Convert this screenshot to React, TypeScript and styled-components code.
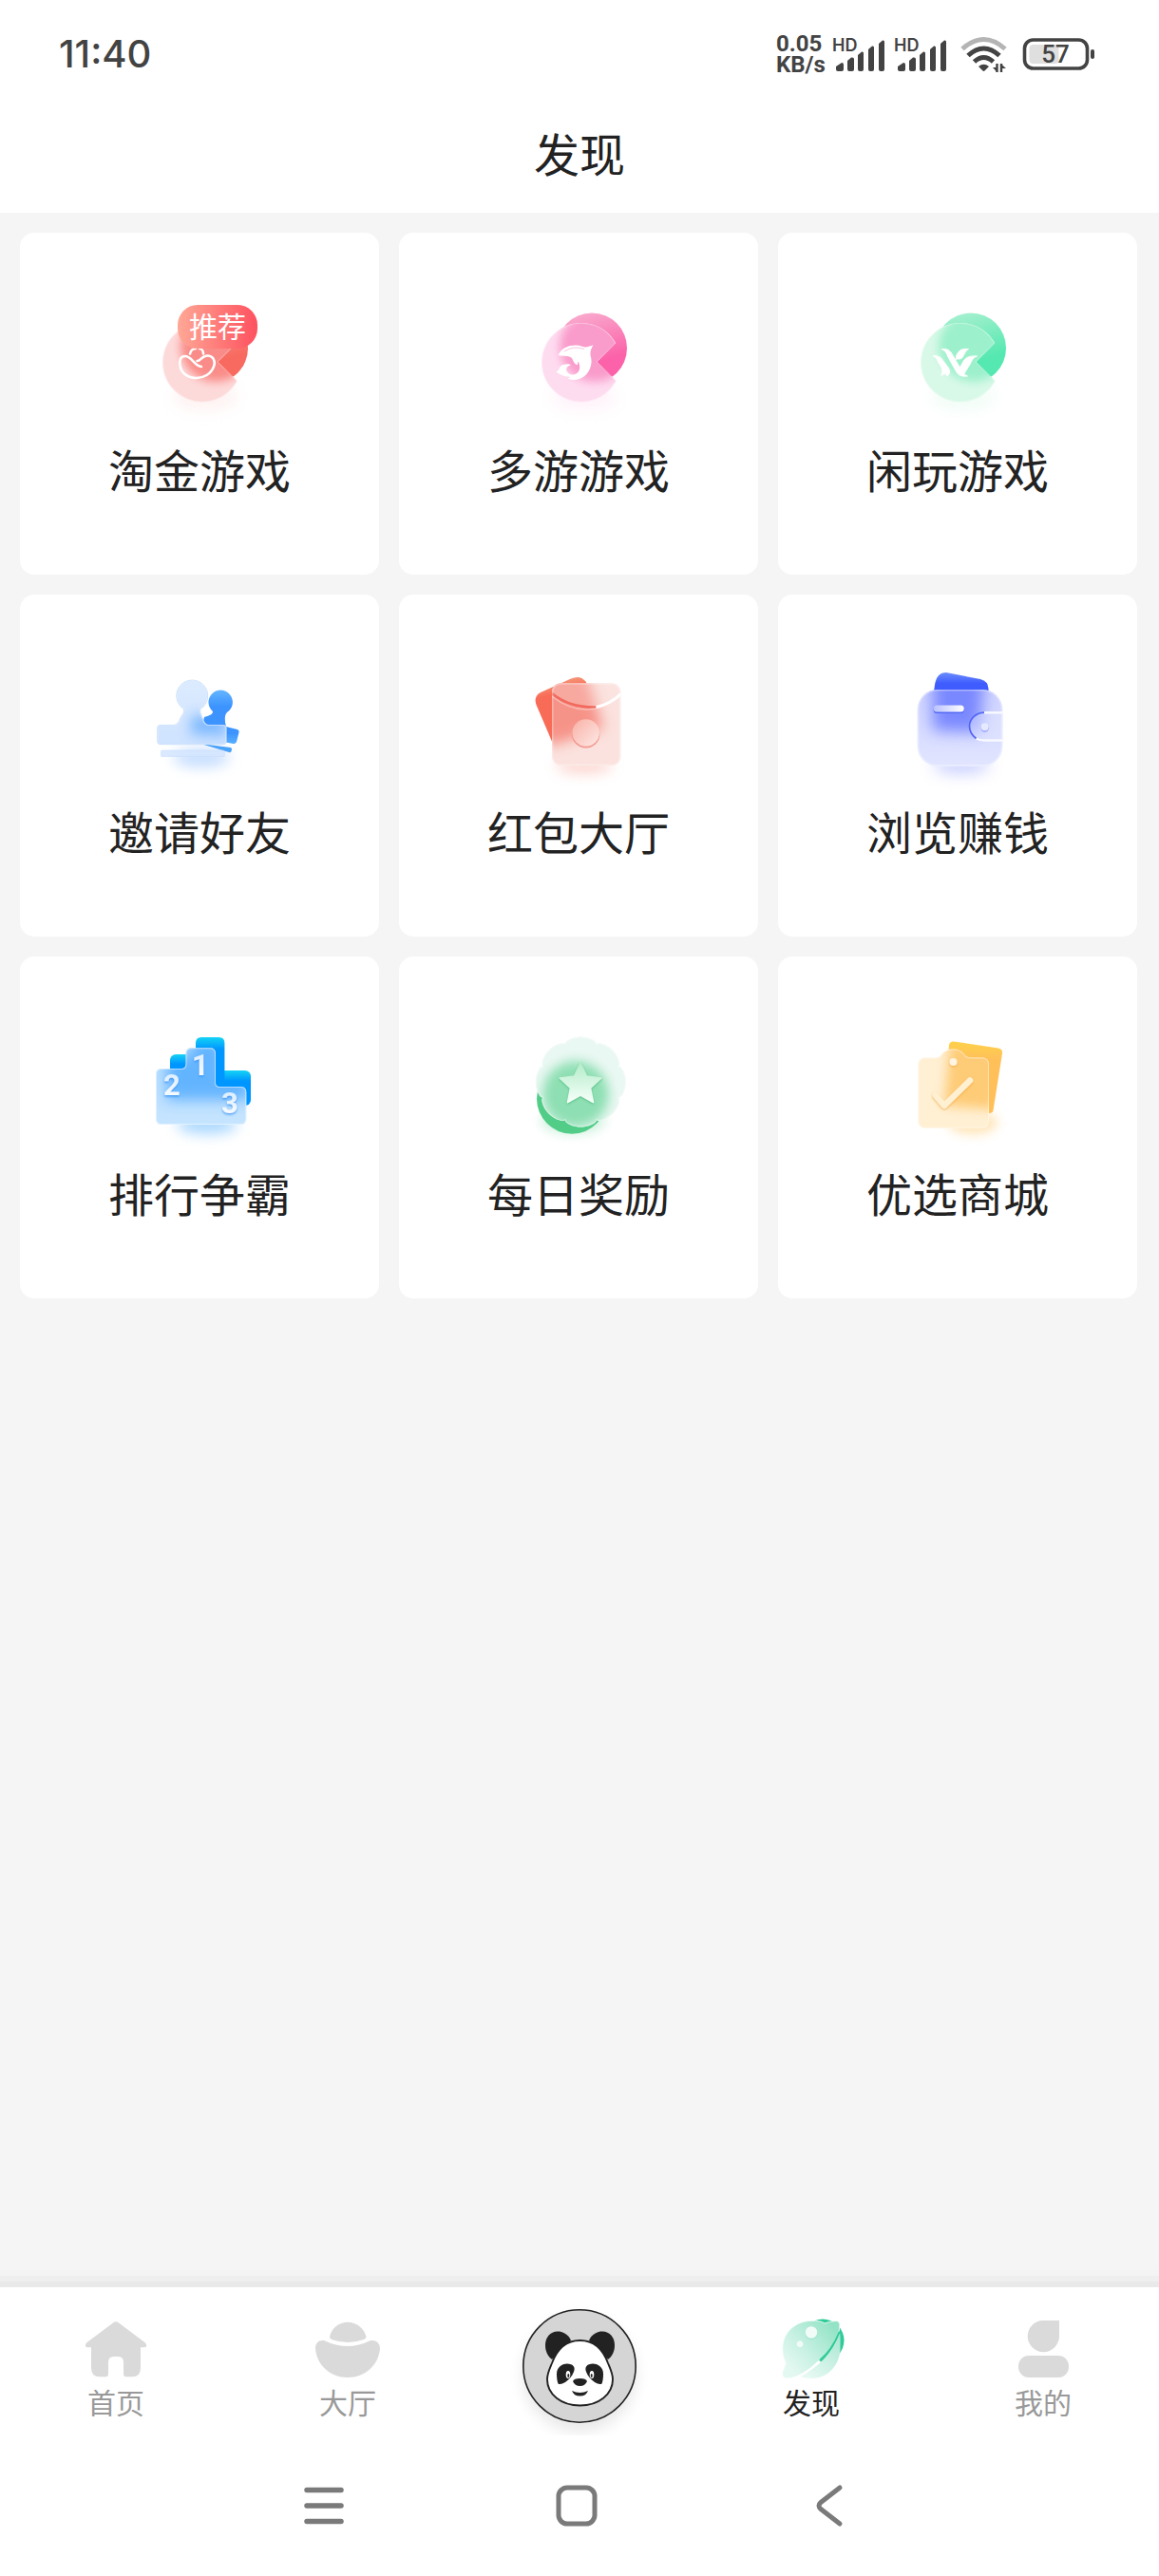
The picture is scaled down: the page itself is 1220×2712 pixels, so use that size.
import React from 'react';
import styled, { createGlobalStyle } from 'styled-components';

const INK = '#222222';
const STATUS = '#434343';
const MUTED = '#dadada';

const GlobalStyle = createGlobalStyle`
  *, *::before, *::after { box-sizing: border-box; }
  body {
    margin: 0;
    background: #f5f5f5;
    color: ${INK};
    font-family: "Noto Sans CJK SC", "Noto Sans", sans-serif;
  }
  button { font: inherit; color: inherit; border: 0; padding: 0; background: none; cursor: pointer; }
  svg { display: block; overflow: visible; }
`;

const Screen = styled.div`
  min-height: 100vh;
  display: flex;
  flex-direction: column;
`;

const StatusBar = styled.div`
  height: 114px;
  padding: 0 68px 0 62px;
  display: flex;
  align-items: center;
  justify-content: space-between;
  background: #ffffff;
  color: ${STATUS};
  font-family: Inter, sans-serif;
`;

const Clock = styled.time`
  font-size: 40px;
  line-height: 48px;
  font-weight: 500;
`;

const StatusGroup = styled.div<{ $gap: number }>`
  display: flex;
  align-items: center;
  gap: ${(p) => p.$gap}px;
`;

const Speed = styled.div`
  width: 52px;
  font-family: Roboto, sans-serif;
  font-size: 24px;
  line-height: 22px;
  font-weight: 700;
  text-align: left;
`;

const TitleBar = styled.header`
  height: 110px;
  padding-bottom: 18px;
  display: flex;
  align-items: center;
  justify-content: center;
  background: #ffffff;
`;

const Title = styled.h1`
  margin: 0;
  font-size: 48px;
  line-height: 60px;
  font-weight: 400;
`;

const Main = styled.main`
  flex: 1;
  padding: 21px 23px 21px 21px;
`;

const Grid = styled.div`
  display: grid;
  grid-template-columns: repeat(3, 1fr);
  gap: 21px;
`;

const Card = styled.button`
  height: 360px;
  padding-top: 75px;
  display: flex;
  flex-direction: column;
  align-items: center;
  gap: 23px;
  background: #ffffff;
  border-radius: 15px;
`;

const IconBox = styled.span`
  position: relative;
  width: 120px;
  height: 120px;
`;

const Badge = styled.span`
  position: absolute;
  left: 37px;
  top: 1px;
  width: 84px;
  height: 46px;
  border-radius: 21px;
  background: linear-gradient(90deg, #ffa896, #fe515f);
  color: #ffffff;
  font-size: 30px;
  line-height: 42px;
  text-align: center;
`;

const CardLabel = styled.span`
  font-size: 48px;
  line-height: 60px;
`;

const TabBar = styled.nav`
  height: 156px;
  display: flex;
  background: #ffffff;
  box-shadow: 0 -6px 0 #e9e9e9, 0 -12px 0 #efefef, 0 -18px 0 #f4f4f4;
`;

const Tab = styled.button<{ $active?: boolean }>`
  flex: 1;
  padding-top: 30px;
  display: flex;
  flex-direction: column;
  align-items: center;
  font-size: 30px;
  line-height: 36px;
  color: ${(p) => (p.$active ? INK : '#999999')};
`;

const CenterTab = styled.button`
  flex: 1;
  padding-top: 23px;
  display: flex;
  justify-content: center;
`;

const Avatar = styled.span`
  width: 120px;
  height: 120px;
  border-radius: 50%;
  box-shadow: 0 9px 15px rgba(0, 0, 0, 0.09);
`;

const SystemNav = styled.nav`
  height: 148px;
  padding-right: 6px;
  display: flex;
  align-items: center;
  justify-content: center;
  gap: 206px;
  background: #ffffff;
`;

const SystemButton = styled.button`
  width: 60px;
  height: 60px;
  display: flex;
  align-items: center;
  justify-content: center;
`;

/* ---------- status icons ---------- */

const Signal = () => (
  <svg width="54" height="36" viewBox="0 0 54 36" fill={STATUS}>
    <text x="-1" y="15" fontFamily="Inter, sans-serif" fontSize="18" fontWeight="600">HD</text>
    <path d="M3 31 L9 27 Q11 27 11 29 V34 Q11 36 9 36 H5 Q3 36 3 34Z" />
    <path d="M15 25 L19 21.500 Q22 21 22 23 V34 Q22 36 20 36 H17 Q15 36 15 34Z" />
    <path d="M26 19 L30 15.500 Q32 15 32 17 V34 Q32 36 30 36 H28 Q26 36 26 34Z" />
    <path d="M37 13 L41 9.500 Q43 9 43 11 V34 Q43 36 41 36 H39 Q37 36 37 34Z" />
    <path d="M48 7 L52 3.500 Q54 3 54 5 V34 Q54 36 52 36 H50 Q48 36 48 34Z" />
  </svg>
);

const Wifi = () => (
  <svg width="52" height="38" viewBox="0 0 52 38" fill="none" strokeWidth="5">
    <path d="M3 13.500 Q25.500 -6.500 48 13.500" stroke="#b4b4b4" />
    <path d="M9 20.500 Q25.500 5.500 42 20.500" stroke={STATUS} />
    <path d="M15.500 27 Q25.500 18 35.500 27" stroke={STATUS} />
    <path d="M20 32 Q25.500 27.500 31 32 L26.500 36.500 Q25.500 37.300 24.500 36.500Z" fill={STATUS} />
    <path d="M39.500 29 V38 M44 38 V29" stroke={STATUS} strokeWidth="2.400" />
    <path d="M35 33 H39 V37.500Z M44 29.500 L49 34 H44Z" fill={STATUS} />
  </svg>
);

const Battery = () => (
  <svg width="76" height="34" viewBox="0 0 76 34">
    <rect x="7.500" y="7" width="31" height="20" rx="4" fill="#dfdfdf" />
    <rect x="2.500" y="2" width="66" height="30" rx="9" fill="none" stroke={STATUS} strokeWidth="3.600" />
    <rect x="72" y="12" width="4" height="10" rx="2" fill={STATUS} />
    <text x="35" y="26" textAnchor="middle" fontFamily="Roboto, sans-serif" fontSize="26" fontWeight="500" fill={STATUS}>57</text>
  </svg>
);

/* ---------- discover icons ---------- */

type CoinProps = {
  id: string;
  top: string;
  bottom: string;
  light: string;
  glow: string;
  children: React.ReactNode;
};

const COIN = 'M99.300 41.500 A41.700 41.700 0 1 0 99.700 81 L80 61Z';

const Coin = ({ id, top, bottom, light, glow, children }: CoinProps) => (
  <svg width="120" height="120" viewBox="0 0 120 120">
    <defs>
      <linearGradient id={`${id}b`} x1="0" y1="0" x2="0.3" y2="1">
        <stop offset="0.1" stopColor={top} />
        <stop offset="0.8" stopColor={bottom} />
      </linearGradient>
      <clipPath id={`${id}c`}><path d={COIN} /></clipPath>
      <filter id={`${id}f`} x="-50%" y="-50%" width="200%" height="200%"><feGaussianBlur stdDeviation="5" /></filter>
      <filter id={`${id}s`} x="-100%" y="-200%" width="300%" height="500%"><feGaussianBlur stdDeviation="8" /></filter>
    </defs>
    <ellipse cx="66" cy="98" rx="34" ry="14" fill={light} opacity="0.35" filter={`url(#${id}s)`} />
    <circle cx="74" cy="46.500" r="37" fill={`url(#${id}b)`} />
    <path d={COIN} fill={light} />
    <g clipPath={`url(#${id}c)`}>
      <circle cx="77" cy="45" r="37" fill={glow} filter={`url(#${id}f)`} />
      <path d={COIN} fill="none" stroke="#ffffff" strokeOpacity="0.35" strokeWidth="2" />
    </g>
    <path d="M99.300 41.500 L80 61 L94.500 76" fill="none" stroke={bottom} strokeWidth="0.800" />
    {children}
  </svg>
);

const GoldIcon = () => (
  <Coin id="gold" top="#f79f95" bottom="#f8695f" light="#fddada" glow="#f98c88">
    <g fill="none" stroke="#ffffff" strokeWidth="2.600" strokeLinecap="round">
      <path d="M57.500 60 C62 60 62 54 69 54.500 C75 55 77 61 75 66 C72 74 64 78 57 78 C49 78 41 74 39.500 65 C38.500 59 40 55 45 55 C52 55 54 65 62 66" />
      <path d="M50 52.500 C51 48 54 47 56 47 M60 47 C62 47 64 49 64 52.500" />
    </g>
  </Coin>
);

const DolphinIcon = () => (
  <Coin id="dolphin" top="#f9aacd" bottom="#fb62a9" light="#fedcf0" glow="#f99bcb">
    <path
      fill="#ffffff"
      d="M38.500 54 C42 46 50 43 58 43.500 C62 43.700 64 45 67 45.500 C70 45.500 73 44 75.500 43.300 C73.500 46.500 72 50 72.500 54 C75 61 73 69 68 74.500 C63 79.500 55 81.500 48.500 78.500 C50 78 51 77.500 51.500 77 C46 77 41 74.500 36.500 71.500 C41 69 39 65 44 64 C47 63.200 50 62.500 52 64.500 C47.500 65.500 46 68.500 48 71.500 C50 74.500 54 75.500 57.500 73.500 C61.500 71 62.500 66 59.500 60.500 C59 61.800 58.800 63 58.800 64.500 C55.500 63 54.500 60.500 53.500 58 C50.500 53.500 45.500 56 38.500 54Z"
    />
    <path d="M45 50 Q54 43.500 66 47.500" stroke="#f994c9" strokeWidth="0.600" fill="none" />
  </Coin>
);

const LeisureIcon = () => (
  <Coin id="leisure" top="#a5f0cf" bottom="#55e8b0" light="#d9f9e8" glow="#9df0cc">
    <g fill="#ffffff" stroke="#ffffff" strokeWidth="1" strokeLinejoin="round">
      <path d="M34 54.500 C40 54.500 42.500 56 44.500 59.500 L49 65.500 C52.500 69.500 52.500 73 49 76 C48 73 46 73 43 75.500 C45 70 43.500 67 40.500 63 C38.500 59 38 56.500 34 54.500Z" />
      <path d="M43 47.500 C48 47 51.500 48 54 52.500 L63 68 C65 72 67 74.500 70.500 76 C65.500 76.500 61.500 76 59 72 L50 56 C48.500 52 47 49 43 47.500Z" />
      <path d="M80.500 55 C76 56.500 75.500 59 73 63.500 L66.500 74 L62.500 67 L66 60.500 C69 55.500 73.500 54.500 80.500 55Z" />
      <path d="M71.500 47.500 C67.500 49 67 54.500 64.500 57 C62.500 59 60 57 58.500 58.500 C58 55 59 53 61 50.500 C63.500 47.500 67 47 71.500 47.500Z" />
    </g>
  </Coin>
);

const InviteIcon = () => {
  const front =
    'M43.500 45.500 A16.500 16.500 0 1 1 61 45.500 C60 49 62 52 64 57 Q66 62.300 70 62.300 H85 Q88.300 62.300 88.300 65.500 V79.500 Q88.300 82.700 85 82.700 H19 Q15.700 82.700 15.700 79.500 V65.500 Q15.700 62.300 19 62.300 H33 Q37 62.300 39 57 C41.500 51 44.500 50 43.500 45.500Z';
  return (
    <svg width="120" height="120" viewBox="0 0 120 120">
      <defs>
        <linearGradient id="invb" x1="0" y1="0" x2="0" y2="1">
          <stop offset="0" stopColor="#64b6ff" />
          <stop offset="0.3" stopColor="#3d94ff" />
          <stop offset="0.8" stopColor="#3d94ff" />
          <stop offset="1" stopColor="#59b0ff" />
        </linearGradient>
        <linearGradient id="invf" x1="0" y1="0" x2="0" y2="1">
          <stop offset="0" stopColor="#dcebff" />
          <stop offset="1" stopColor="#cfe3ff" />
        </linearGradient>
        <clipPath id="invc"><path d={front} /></clipPath>
        <filter id="invblur" x="-100%" y="-200%" width="300%" height="500%"><feGaussianBlur stdDeviation="7" /></filter>
      </defs>
      <ellipse cx="62" cy="97" rx="30" ry="10" fill="#b9d6ff" opacity="0.8" filter="url(#invblur)" />
      <path d="M74 48 A12.700 12.700 0 1 1 89 49 C86 52 86.500 58 88 64 L100 67 Q102 68 101.500 70 L99 80 Q98 82.500 95.500 82 L60 75 L65 54 C71 52 74 51 74 48Z" fill="url(#invb)" />
      <path d="M61.500 82 L92.500 86 Q94.500 86.500 94 88 L93.500 90 Q93 91.500 91 91Z" fill="#4aa2fb" />
      <rect x="19.300" y="89" width="67" height="6.700" rx="1.500" fill="#d5e6ff" stroke="#c2d8fb" strokeWidth="0.600" opacity="0.85" />
      <path d={front} fill="url(#invf)" />
      <g clipPath="url(#invc)">
        <path d="M52 52 L86 54 L90 74 L50 72Z" fill="#6db0ff" opacity="0.85" filter="url(#invblur)" />
        <path d={front} fill="none" stroke="#ffffff" strokeOpacity="0.7" strokeWidth="1.500" />
      </g>
      <path d={front} fill="none" stroke="#a9c8f5" strokeWidth="0.500" />
    </svg>
  );
};

const EnvelopeIcon = () => (
  <svg width="120" height="120" viewBox="0 0 120 120">
    <defs>
      <linearGradient id="envb" x1="0.3" y1="0" x2="0.5" y2="1">
        <stop offset="0" stopColor="#f5a07f" />
        <stop offset="0.25" stopColor="#f86c57" />
      </linearGradient>
      <linearGradient id="envk" x1="0" y1="0" x2="1" y2="1">
        <stop offset="0" stopColor="#f9b1a6" />
        <stop offset="1" stopColor="#fde9e6" />
      </linearGradient>
      <clipPath id="envc"><rect x="32" y="18.300" width="72.300" height="86.700" rx="9" /></clipPath>
      <filter id="envblur" x="-100%" y="-200%" width="300%" height="500%"><feGaussianBlur stdDeviation="7" /></filter>
    </defs>
    <ellipse cx="66" cy="106" rx="30" ry="7" fill="#f9b5aa" opacity="0.6" filter="url(#envblur)" />
    <path d="M20 28 L52 13.500 Q62 9 68 17 L82 68 L33 82 L15.500 41 Q12.500 32 20 28Z" fill="url(#envb)" />
    <rect x="32" y="18.300" width="72.300" height="86.700" rx="9" fill="#fbe2de" />
    <g clipPath="url(#envc)">
      <path d="M10 0 L66 0 L86 66 L32 84 L0 60Z" fill="#f5867a" opacity="0.86" filter="url(#envblur)" />
      <path d="M32 29 Q68 60 104 29 V18 H32Z" fill="#fde7e3" opacity="0.25" />
      <path d="M32 29 Q50 44 78.500 43.500" fill="none" stroke="#f26a5d" strokeWidth="2.600" />
      <path d="M78.500 43.500 Q94 40 105 29" fill="none" stroke="#ffffff" strokeWidth="3" />
      <path d="M32 32 Q68 60 104 32" fill="none" stroke="#ffffff" strokeOpacity="0.35" strokeWidth="1.500" />
      <rect x="32.500" y="18.800" width="71.300" height="85.700" rx="9" fill="none" stroke="#ffffff" strokeOpacity="0.3" strokeWidth="2" />
    </g>
    <circle cx="67.700" cy="72" r="14.600" fill="#ee7b70" opacity="0.7" />
    <circle cx="67.700" cy="70.500" r="14.300" fill="url(#envk)" />
  </svg>
);

const WalletIcon = () => (
  <svg width="120" height="120" viewBox="0 0 120 120">
    <defs>
      <linearGradient id="walb" x1="0" y1="0" x2="0" y2="1">
        <stop offset="0" stopColor="#6c8dfb" />
        <stop offset="0.5" stopColor="#3f5dff" />
      </linearGradient>
      <linearGradient id="walf" x1="0" y1="0" x2="0" y2="1">
        <stop offset="0" stopColor="#cdd2ff" />
        <stop offset="1" stopColor="#e1e5ff" />
      </linearGradient>
      <linearGradient id="wald" x1="0" y1="0" x2="1" y2="0">
        <stop offset="0" stopColor="#b9c2ff" />
        <stop offset="1" stopColor="#ffffff" />
      </linearGradient>
      <clipPath id="walc"><rect x="17.700" y="25" width="89.600" height="80.700" rx="21" /></clipPath>
      <filter id="walblur" x="-100%" y="-200%" width="300%" height="500%"><feGaussianBlur stdDeviation="8" /></filter>
    </defs>
    <ellipse cx="64" cy="105" rx="30" ry="8" fill="#b8c0ff" opacity="0.8" filter="url(#walblur)" />
    <path d="M34.500 30 L36 20 Q38 7 48 7 L84 14 Q92 16 92.500 24 V30Z" fill="url(#walb)" />
    <rect x="17.700" y="25" width="89.600" height="80.700" rx="21" fill="url(#walf)" />
    <g clipPath="url(#walc)">
      <path d="M34 6 H88 L84 70 L34 68Z" fill="#6c7bff" opacity="0.86" filter="url(#walblur)" />
      <path d="M110 49 H88 C78 50 72.500 57 72.500 63.500 C72.500 71 80 78.500 88 78.500 H110Z" fill="#e2e6ff" opacity="0.45" />
      <path d="M88 49.200 H110 M79.500 76.500 Q83 78.500 88 78.500 H110" fill="none" stroke="#f8f9ff" strokeWidth="2.400" />
      <path d="M88 49.200 C78 49.500 72.500 57 72.500 63.500 C72.500 69 75 73 79.500 76.500" fill="none" stroke="#5064f5" strokeWidth="1.700" />
      <rect x="18.300" y="25.600" width="88.400" height="79.500" rx="20.500" fill="none" stroke="#ffffff" strokeOpacity="0.35" strokeWidth="2" />
    </g>
    <rect x="34.700" y="43" width="32" height="7" rx="3.500" fill="#5367f4" />
    <rect x="34.700" y="41.500" width="32" height="7" rx="3.500" fill="url(#wald)" />
    <circle cx="88.700" cy="65.500" r="4.200" fill="#98a4fb" />
    <circle cx="88.700" cy="64.300" r="4" fill="#e6eaff" />
  </svg>
);

const RankIcon = () => {
  const front =
    'M14 49 Q14 43 20 43 H41 Q45.600 43 45.600 38 V27 Q45.600 21.300 51.500 21.300 H71 Q77 21.300 77 27 V58 Q77 62 81 62 H103.300 Q109.300 62 109.300 68 V96 Q109.300 102 103.300 102 H20 Q14 102 14 96Z';
  return (
    <svg width="120" height="120" viewBox="0 0 120 120">
      <defs>
        <linearGradient id="rkb" x1="0" y1="0" x2="0" y2="1">
          <stop offset="0" stopColor="#14d3f4" />
          <stop offset="0.18" stopColor="#0096ff" />
        </linearGradient>
        <linearGradient id="rkr" x1="0" y1="0" x2="0" y2="1">
          <stop offset="0" stopColor="#14d3f4" />
          <stop offset="0.3" stopColor="#0096ff" />
        </linearGradient>
        <linearGradient id="rkf" x1="0" y1="0" x2="0" y2="1">
          <stop offset="0" stopColor="#b5dcff" />
          <stop offset="1" stopColor="#c5e4ff" />
        </linearGradient>
        <linearGradient id="rkt" x1="0" y1="0" x2="0" y2="1">
          <stop offset="0" stopColor="#d5ebff" />
          <stop offset="1" stopColor="#ffffff" />
        </linearGradient>
        <clipPath id="rkc"><path d={front} /></clipPath>
        <filter id="rkblur" x="-100%" y="-200%" width="300%" height="500%"><feGaussianBlur stdDeviation="7" /></filter>
        <filter id="rkdrop"><feDropShadow dx="0" dy="1.500" stdDeviation="0.800" floodColor="#2f8ef0" floodOpacity="0.8" /></filter>
      </defs>
      <ellipse cx="68" cy="102" rx="32" ry="10" fill="#8ecbff" opacity="0.75" filter="url(#rkblur)" />
      <rect x="29" y="28" width="34" height="34" rx="6" fill="url(#rkr)" />
      <rect x="72" y="45" width="42" height="37" rx="6" fill="url(#rkr)" />
      <path d="M56 16 Q56 10 62 10 H80.400 Q86.400 10 86.400 16 V80 H56Z" fill="url(#rkb)" />
      <path d={front} fill="url(#rkf)" />
      <g clipPath="url(#rkc)">
        <path d="M26 30 H52 V14 H84 V50 H112 V76 H26Z" fill="#4ba8ff" opacity="0.78" filter="url(#rkblur)" />
        <path d={front} fill="none" stroke="#ffffff" strokeOpacity="0.5" strokeWidth="2" />
      </g>
      <g fill="url(#rkt)" filter="url(#rkdrop)" fontFamily="Roboto, sans-serif" fontWeight="700" fontSize="31" textAnchor="middle">
        <text x="61" y="50">1</text>
        <text x="31" y="71">2</text>
        <text x="92" y="90">3</text>
      </g>
    </svg>
  );
};

const scallop = Array.from({ length: 240 }, (_, i) => {
  const a = (i / 240) * Math.PI * 2;
  const r = 43.500 + 4 * Math.sqrt(Math.abs(Math.cos(4 * a)));
  return `${i ? 'L' : 'M'}${(62.300 + r * Math.sin(a)).toFixed(2)} ${(57 - r * Math.cos(a)).toFixed(2)}`;
}).join(' ') + 'Z';

const star = Array.from({ length: 10 }, (_, i) => {
  const a = (i / 10) * Math.PI * 2;
  const r = i % 2 ? 11 : 23;
  return `${i ? 'L' : 'M'}${(62 + r * Math.sin(a)).toFixed(1)} ${(60 - r * Math.cos(a)).toFixed(1)}`;
}).join(' ') + 'Z';

const RewardIcon = () => (
  <svg width="120" height="120" viewBox="0 0 120 120">
    <defs>
      <linearGradient id="rws" x1="0" y1="0" x2="0" y2="1">
        <stop offset="0" stopColor="#b4ecc9" />
        <stop offset="1" stopColor="#f6fffa" />
      </linearGradient>
      <clipPath id="rwc"><path d={scallop} /></clipPath>
      <filter id="rwblur" x="-100%" y="-100%" width="300%" height="300%"><feGaussianBlur stdDeviation="6" /></filter>
      <filter id="rwdrop"><feDropShadow dx="0" dy="1" stdDeviation="0.800" floodColor="#43b878" floodOpacity="0.8" /></filter>
    </defs>
    <ellipse cx="54" cy="98" rx="34" ry="14" fill="#9fe5bd" opacity="0.5" filter="url(#rwblur)" />
    <circle cx="53" cy="74.700" r="37" fill="#51cd87" />
    <path d={scallop} fill="#eaf8f3" />
    <g clipPath="url(#rwc)">
      <circle cx="57" cy="70" r="35" fill="#8edfb3" filter="url(#rwblur)" />
      <path d={scallop} fill="none" stroke="#ffffff" strokeOpacity="0.4" strokeWidth="2" />
    </g>
    <path d={star} fill="url(#rws)" stroke="url(#rws)" strokeWidth="1.500" strokeLinejoin="round" filter="url(#rwdrop)" />
  </svg>
);

const MallIcon = () => {
  const front =
    'M18.400 39 Q18.400 31.500 26 31.500 H36 Q41 31.500 43 28 Q47 22.500 55.500 22.500 Q63 22.500 67 28 Q69 31.500 74 31.500 H86 Q93 31.500 93 39 V98 Q93 105.700 85 105.700 H26 Q18.400 105.700 18.400 98Z';
  return (
    <svg width="120" height="120" viewBox="0 0 120 120">
      <defs>
        <linearGradient id="mlb" x1="0" y1="0" x2="0" y2="1">
          <stop offset="0" stopColor="#ffd14a" />
          <stop offset="0.25" stopColor="#ffc05a" />
        </linearGradient>
        <clipPath id="mlc"><path d={front} /></clipPath>
        <filter id="mlblur" x="-100%" y="-200%" width="300%" height="500%"><feGaussianBlur stdDeviation="6" /></filter>
        <filter id="mldrop"><feDropShadow dx="0" dy="1.200" stdDeviation="0.800" floodColor="#f0a93a" floodOpacity="0.8" /></filter>
      </defs>
      <ellipse cx="76" cy="100" rx="26" ry="12" fill="#ffd68f" opacity="0.65" filter="url(#mlblur)" />
      <path d="M56 14.500 L103 21.500 Q107.500 22.500 107 27 L97.500 87 Q97 90 93 90 L46 82 L51 18 Q52 14 56 14.500Z" fill="url(#mlb)" />
      <path d={front} fill="#fff0d4" />
      <g clipPath="url(#mlc)">
        <path d="M52 14 L108 20 L98 86 L46 82Z" fill="#fec566" opacity="0.85" filter="url(#mlblur)" />
        <path d={front} fill="none" stroke="#ffffff" strokeOpacity="0.4" strokeWidth="2" />
      </g>
      <g filter="url(#mldrop)">
        <circle cx="55.500" cy="36" r="4" fill="#fff5e2" />
        <path d="M36.500 71 L46 82 L73 55.500" fill="none" stroke="#fff0d2" strokeWidth="6.500" strokeLinecap="round" strokeLinejoin="round" />
      </g>
    </svg>
  );
};

/* ---------- tab icons ---------- */

const HomeIcon = () => (
  <svg width="72" height="72" viewBox="0 0 72 72" fill={MUTED}>
    <path d="M33 7.500 Q36 5 39 7.500 L67 28.500 Q70 33 65.500 33.300 H62 V55 Q62 64.300 53 64.300 H47 Q44 64.300 44 61 V49 Q44 43 38.500 43 H33.500 Q28 43 28 49 V61 Q28 64.300 25 64.300 H19 Q10 64.300 10 55 V33.300 H6.500 Q2 33 5 28.500Z" />
  </svg>
);

const HallIcon = () => (
  <svg width="72" height="72" viewBox="0 0 72 72" fill={MUTED}>
    <path d="M17 22 C19 13 27 6.700 36 6.700 C45 6.700 53 13 55.500 22 Q55.500 24 53 25 Q36 31 19 25 Q17 24 17 22Z" />
    <path d="M11 26 Q36 38 60 26 Q69 25 70 34 C69 52 54 65 36 65 C18 65 3 52 2 34 Q2.500 25 11 26Z" />
  </svg>
);

const DiscoverIcon = () => (
  <svg width="72" height="72" viewBox="0 0 72 72">
    <defs>
      <linearGradient id="dsf" x1="0.9" y1="0.1" x2="0.1" y2="0.8">
        <stop offset="0" stopColor="#93e3c6" />
        <stop offset="0.6" stopColor="#c8f1e3" />
        <stop offset="1" stopColor="#e4f8f2" />
      </linearGradient>
      <linearGradient id="dsl" x1="1" y1="0" x2="0.3" y2="1">
        <stop offset="0" stopColor="#a5e6d0" />
        <stop offset="1" stopColor="#e6f9f3" />
      </linearGradient>
    </defs>
    <circle cx="48" cy="26" r="22.500" fill="#2fcb98" />
    <path d="M66 17 C67 24 66.500 28 66.500 35 C66 52 53 66 37 66 Q29 66 24 63.500 C44 54 58 40 66 17Z" fill="url(#dsl)" />
    <path d="M36 5.300 Q46 5 50 8 Q55 6 61 5.500 Q66 5 66 10 Q66 16 63 21 C54 42 39 56 20 64 Q14 66.500 9 66 Q4 64 6 58 Q8 54 9 50 Q5 42 5.600 34 C6 17 20 5.500 36 5.300Z" fill="url(#dsf)" stroke="#ffffff" strokeWidth="0.800" />
    <path d="M65.500 17 Q58 36 45 47" stroke="#2fcb98" strokeWidth="2" fill="none" />
    <path d="M44 48 Q34 58 22 64.500" stroke="#ffffff" strokeWidth="2" fill="none" />
    <circle cx="36" cy="18.500" r="6.500" fill="#7fd9b9" opacity="0.5" />
    <circle cx="36" cy="17.500" r="6.300" fill="#f1fcf8" />
    <circle cx="24" cy="29.800" r="3.300" fill="#f1fcf8" />
  </svg>
);

const MineIcon = () => (
  <svg width="72" height="72" viewBox="0 0 72 72" fill={MUTED}>
    <path d="M36 5 H53 V21.500 A16.600 16.600 0 0 1 19.700 21.500 A16.600 16.600 0 0 1 36 5Z" />
    <rect x="10" y="42" width="53" height="23" rx="11" />
  </svg>
);

const Panda = () => (
  <svg width="120" height="120" viewBox="0 0 120 120">
    <circle cx="60" cy="60" r="59.200" fill="#d5d5d5" stroke={INK} strokeWidth="1.600" />
    <g fill={INK}>
      <path d="M51 33 C48 26 42 23.500 37 23.500 C29 23.500 24 30 24 38 C24 45 27 50 31 53Z" />
      <path d="M70 33 C73 26 79 23.500 84 23.500 C92 23.500 97 30 97 38 C97 45 94 50 90 53Z" />
    </g>
    <path d="M60.500 33 C76 33 85 43 90 57 C93 64 95 68 95 74 C95 90 80 101.500 60.500 101.500 C41 101.500 26 90 26 74 C26 68 28 64 31 57 C36 43 45 33 60.500 33Z" fill="#ffffff" stroke={INK} strokeWidth="1.900" />
    <g fill={INK}>
      <path d="M36 68 C36 62 41 57.500 47 57.500 C53 57.500 56 61 54 66 C52 71 49 74 45 77 Q40 80 37.500 78.500 Q36 75 36 68Z" />
      <path d="M85 68 C85 62 80 57.500 74 57.500 C68 57.500 65 61 67 66 C69 71 72 74 76 77 Q81 80 83.500 78.500 Q85 75 85 68Z" />
      <path d="M53 76 Q54 73 60.500 73 Q67 73 68 76 Q66 81 60.500 81 Q55 81 53 76Z" />
      <path d="M52 86 Q60.500 90 69 86 Q67 91.500 60.500 91.500 Q54 91.500 52 86Z" />
    </g>
    <ellipse cx="48" cy="69" rx="2.300" ry="4" fill="#ffffff" />
    <ellipse cx="73" cy="69" rx="2.300" ry="4" fill="#ffffff" />
    <ellipse cx="48.300" cy="70" rx="1" ry="2" fill={INK} />
    <ellipse cx="72.700" cy="70" rx="1" ry="2" fill={INK} />
  </svg>
);

/* ---------- page ---------- */

const entries = [
  { label: '淘金游戏', Icon: GoldIcon, badge: '推荐' },
  { label: '多游游戏', Icon: DolphinIcon },
  { label: '闲玩游戏', Icon: LeisureIcon },
  { label: '邀请好友', Icon: InviteIcon },
  { label: '红包大厅', Icon: EnvelopeIcon },
  { label: '浏览赚钱', Icon: WalletIcon },
  { label: '排行争霸', Icon: RankIcon },
  { label: '每日奖励', Icon: RewardIcon },
  { label: '优选商城', Icon: MallIcon },
];

export default function App() {
  return (
    <Screen>
      <GlobalStyle />
      <StatusBar>
        <Clock>11:40</Clock>
        <StatusGroup $gap={14}>
          <StatusGroup $gap={8}>
            <Speed>0.05<br />KB/s</Speed>
            <StatusGroup $gap={11}>
              <Signal />
              <Signal />
            </StatusGroup>
          </StatusGroup>
          <Wifi />
          <Battery />
        </StatusGroup>
      </StatusBar>
      <TitleBar>
        <Title>发现</Title>
      </TitleBar>
      <Main>
        <Grid>
          {entries.map(({ label, Icon, badge }) => (
            <Card key={label} type="button">
              <IconBox>
                <Icon />
                {badge && <Badge>{badge}</Badge>}
              </IconBox>
              <CardLabel>{label}</CardLabel>
            </Card>
          ))}
        </Grid>
      </Main>
      <TabBar>
        <Tab type="button"><HomeIcon />首页</Tab>
        <Tab type="button"><HallIcon />大厅</Tab>
        <CenterTab type="button" aria-label="Panda">
          <Avatar><Panda /></Avatar>
        </CenterTab>
        <Tab type="button" $active aria-current="page"><DiscoverIcon />发现</Tab>
        <Tab type="button"><MineIcon />我的</Tab>
      </TabBar>
      <SystemNav>
        <SystemButton type="button" aria-label="Menu">
          <svg width="42" height="40" viewBox="0 0 42 40" stroke="#7a7a7a" strokeWidth="5.500" strokeLinecap="round">
            <path d="M3 3.500 H39 M3 20 H39 M3 36.500 H39" />
          </svg>
        </SystemButton>
        <SystemButton type="button" aria-label="Home">
          <svg width="44" height="44" viewBox="0 0 44 44" fill="none" stroke="#7a7a7a" strokeWidth="5">
            <rect x="3" y="3" width="38" height="38" rx="9" />
          </svg>
        </SystemButton>
        <SystemButton type="button" aria-label="Back">
          <svg width="28" height="44" viewBox="0 0 28 44" fill="none" stroke="#7a7a7a" strokeWidth="5" strokeLinecap="round">
            <path d="M25 3 L5 18.500 Q1 22 5 25.500 L25 41" />
          </svg>
        </SystemButton>
      </SystemNav>
    </Screen>
  );
}
